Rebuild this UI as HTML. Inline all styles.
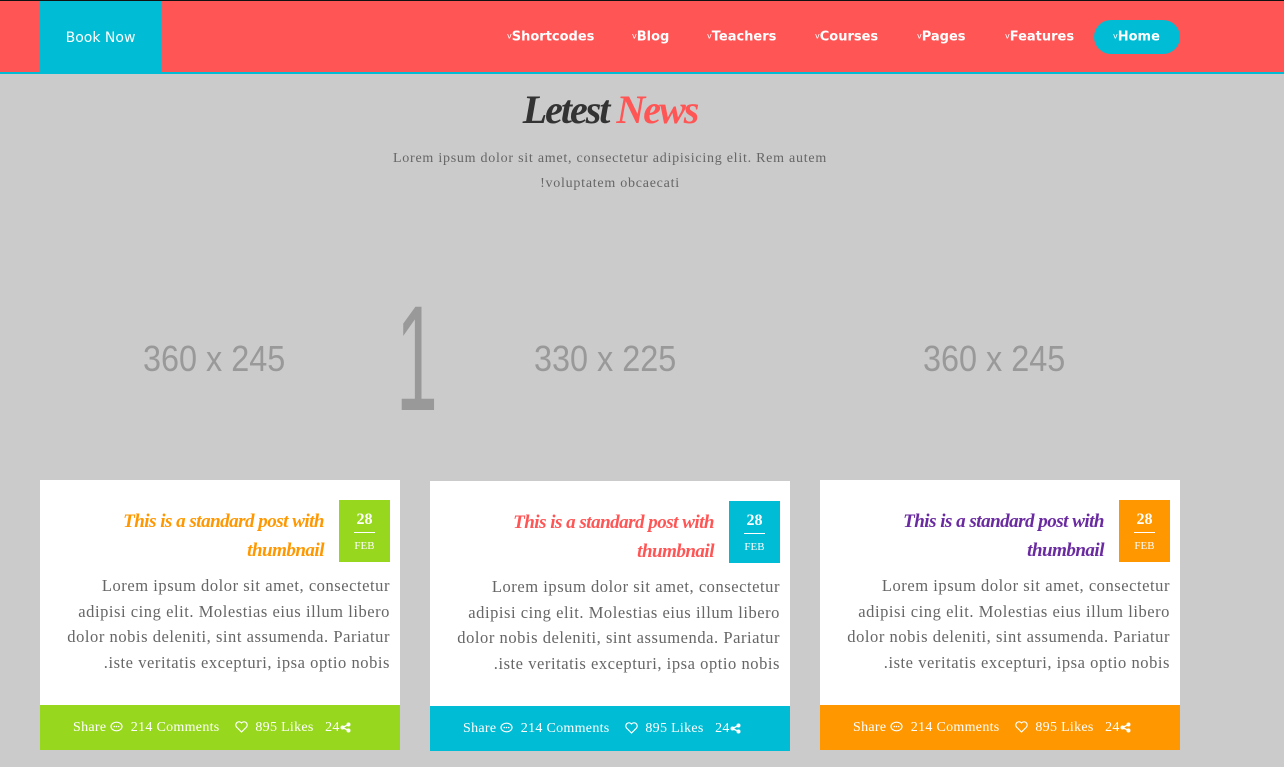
<!DOCTYPE html>
<html><head><meta charset="utf-8"><style>
*{margin:0;padding:0;box-sizing:border-box}
body{width:1284px;height:767px;background:#cbcbcb;font-family:"Liberation Serif",serif;overflow:hidden;position:relative}
.nav{position:absolute;top:0;left:0;width:1284px;height:74px;background:#ff5555;border-top:1px solid #111;border-bottom:2px solid #00bcd4}
.book{position:absolute;left:40px;top:0;width:121px;height:72px;background:#00bcd4;color:#fff;font:14px "DejaVu Sans",sans-serif;text-align:center;line-height:74px}
.menu{position:absolute;top:36px;color:#fff;font:bold 13px "DejaVu Sans",sans-serif;transform:translateY(-50%)}
.menu small{font-size:8px;font-weight:normal;vertical-align:2px}
.home{position:absolute;left:1094px;top:19px;width:86px;height:34px;border-radius:17px;background:#00bcd4}
h1{position:absolute;top:86px;left:0;width:1220px;text-align:center;font:italic bold 40px "Liberation Serif",serif;color:#333;letter-spacing:-2px}
h1 span{color:#ff5555}
.sub{position:absolute;top:146px;left:300px;width:620px;text-align:center;font-size:14px;line-height:25px;color:#666;letter-spacing:.75px}
.ph{position:absolute;top:338px;font:36px "Liberation Sans",sans-serif;color:#999;transform:scaleX(.9);transform-origin:left}
.one{position:absolute;left:396px;top:272px;font:150px "Liberation Sans",sans-serif;color:#999;transform:scaleX(.5);transform-origin:left}
.card{position:absolute;width:360px;height:270px;background:#fff}
.title{position:absolute;right:76px;top:27px;width:260px;text-align:right;font:italic bold 19px/29px "Liberation Serif",serif;letter-spacing:-.5px}
.date{position:absolute;right:10px;top:20px;width:51px;height:62px;color:#fff;text-align:center}
.date b{display:block;font-size:16px;margin-top:10px;line-height:20px}
.date i{display:block;width:21px;height:1px;background:#fff;margin:2px auto 3px}
.date em{font-style:normal;font-size:11px}
.txt{position:absolute;right:10px;top:93px;width:360px;text-align:right;font-size:16.5px;line-height:25.5px;color:#666;letter-spacing:.55px;white-space:nowrap}
.foot{position:absolute;left:0;bottom:0;width:360px;height:45px;color:#fff;font-size:14px;line-height:45px;padding-left:33px;letter-spacing:.3px;white-space:nowrap}
.foot svg{vertical-align:-2px}
</style></head><body>
<div class="nav">
<div class="book">Book Now</div>
<div class="home"></div>
<div class="menu" style="left:507px"><small>v</small>Shortcodes</div>
<div class="menu" style="left:632px"><small>v</small>Blog</div>
<div class="menu" style="left:707px"><small>v</small>Teachers</div>
<div class="menu" style="left:815px"><small>v</small>Courses</div>
<div class="menu" style="left:917px"><small>v</small>Pages</div>
<div class="menu" style="left:1005px"><small>v</small>Features</div>
<div class="menu" style="left:1113px"><small>v</small>Home</div>
</div>
<h1>Letest <span>News</span></h1>
<div class="sub">Lorem ipsum dolor sit amet, consectetur adipisicing elit. Rem autem<br>!voluptatem obcaecati</div>
<div class="ph" style="left:143px">360 x 245</div>
<div class="one">1</div>
<div class="ph" style="left:534px">330 x 225</div>
<div class="ph" style="left:923px">360 x 245</div>

<div class="card" style="left:40px;top:480px">
<div class="title" style="color:#ff9800">This is a standard post with thumbnail</div>
<div class="date" style="background:#97d81e"><b>28</b><i></i><em>FEB</em></div>
<div class="txt">Lorem ipsum dolor sit amet, consectetur<br>adipisi cing elit. Molestias eius illum libero<br>dolor nobis deleniti, sint assumenda. Pariatur<br>.iste veritatis excepturi, ipsa optio nobis</div>
<div class="foot" style="background:#97d81e">Share <svg width="13" height="12" viewBox="0 0 13 12"><ellipse cx="6.5" cy="5.5" rx="5.5" ry="4.3" fill="none" stroke="#fff" stroke-width="1.2"/><circle cx="4.3" cy="5.5" r=".8" fill="#fff"/><circle cx="6.5" cy="5.5" r=".8" fill="#fff"/><circle cx="8.7" cy="5.5" r=".8" fill="#fff"/></svg>&nbsp; 214 Comments &nbsp;&nbsp; <svg width="13" height="12" viewBox="0 0 13 12"><path d="M6.5 11L1.5 6A3 3 0 0 1 6.5 2A3 3 0 0 1 11.5 6Z" fill="none" stroke="#fff" stroke-width="1.2"/></svg>&nbsp; 895 Likes &nbsp;&nbsp;24<svg width="11" height="11" viewBox="0 0 11 11"><circle cx="8.5" cy="2.5" r="2" fill="#fff"/><circle cx="8.5" cy="8.5" r="2" fill="#fff"/><circle cx="2.5" cy="5.5" r="2" fill="#fff"/><path d="M2.5 5.5L8.5 2.5M2.5 5.5L8.5 8.5" stroke="#fff" stroke-width="1.3"/></svg></div>
</div>
<div class="card" style="left:430px;top:481px">
<div class="title" style="color:#ff5555">This is a standard post with thumbnail</div>
<div class="date" style="background:#00bcd4"><b>28</b><i></i><em>FEB</em></div>
<div class="txt">Lorem ipsum dolor sit amet, consectetur<br>adipisi cing elit. Molestias eius illum libero<br>dolor nobis deleniti, sint assumenda. Pariatur<br>.iste veritatis excepturi, ipsa optio nobis</div>
<div class="foot" style="background:#00bcd4">Share <svg width="13" height="12" viewBox="0 0 13 12"><ellipse cx="6.5" cy="5.5" rx="5.5" ry="4.3" fill="none" stroke="#fff" stroke-width="1.2"/><circle cx="4.3" cy="5.5" r=".8" fill="#fff"/><circle cx="6.5" cy="5.5" r=".8" fill="#fff"/><circle cx="8.7" cy="5.5" r=".8" fill="#fff"/></svg>&nbsp; 214 Comments &nbsp;&nbsp; <svg width="13" height="12" viewBox="0 0 13 12"><path d="M6.5 11L1.5 6A3 3 0 0 1 6.5 2A3 3 0 0 1 11.5 6Z" fill="none" stroke="#fff" stroke-width="1.2"/></svg>&nbsp; 895 Likes &nbsp;&nbsp;24<svg width="11" height="11" viewBox="0 0 11 11"><circle cx="8.5" cy="2.5" r="2" fill="#fff"/><circle cx="8.5" cy="8.5" r="2" fill="#fff"/><circle cx="2.5" cy="5.5" r="2" fill="#fff"/><path d="M2.5 5.5L8.5 2.5M2.5 5.5L8.5 8.5" stroke="#fff" stroke-width="1.3"/></svg></div>
</div>
<div class="card" style="left:820px;top:480px">
<div class="title" style="color:#6a2aa0">This is a standard post with thumbnail</div>
<div class="date" style="background:#ff9800"><b>28</b><i></i><em>FEB</em></div>
<div class="txt">Lorem ipsum dolor sit amet, consectetur<br>adipisi cing elit. Molestias eius illum libero<br>dolor nobis deleniti, sint assumenda. Pariatur<br>.iste veritatis excepturi, ipsa optio nobis</div>
<div class="foot" style="background:#ff9800">Share <svg width="13" height="12" viewBox="0 0 13 12"><ellipse cx="6.5" cy="5.5" rx="5.5" ry="4.3" fill="none" stroke="#fff" stroke-width="1.2"/><circle cx="4.3" cy="5.5" r=".8" fill="#fff"/><circle cx="6.5" cy="5.5" r=".8" fill="#fff"/><circle cx="8.7" cy="5.5" r=".8" fill="#fff"/></svg>&nbsp; 214 Comments &nbsp;&nbsp; <svg width="13" height="12" viewBox="0 0 13 12"><path d="M6.5 11L1.5 6A3 3 0 0 1 6.5 2A3 3 0 0 1 11.5 6Z" fill="none" stroke="#fff" stroke-width="1.2"/></svg>&nbsp; 895 Likes &nbsp;&nbsp;24<svg width="11" height="11" viewBox="0 0 11 11"><circle cx="8.5" cy="2.5" r="2" fill="#fff"/><circle cx="8.5" cy="8.5" r="2" fill="#fff"/><circle cx="2.5" cy="5.5" r="2" fill="#fff"/><path d="M2.5 5.5L8.5 2.5M2.5 5.5L8.5 8.5" stroke="#fff" stroke-width="1.3"/></svg></div>
</div>
</body></html>
